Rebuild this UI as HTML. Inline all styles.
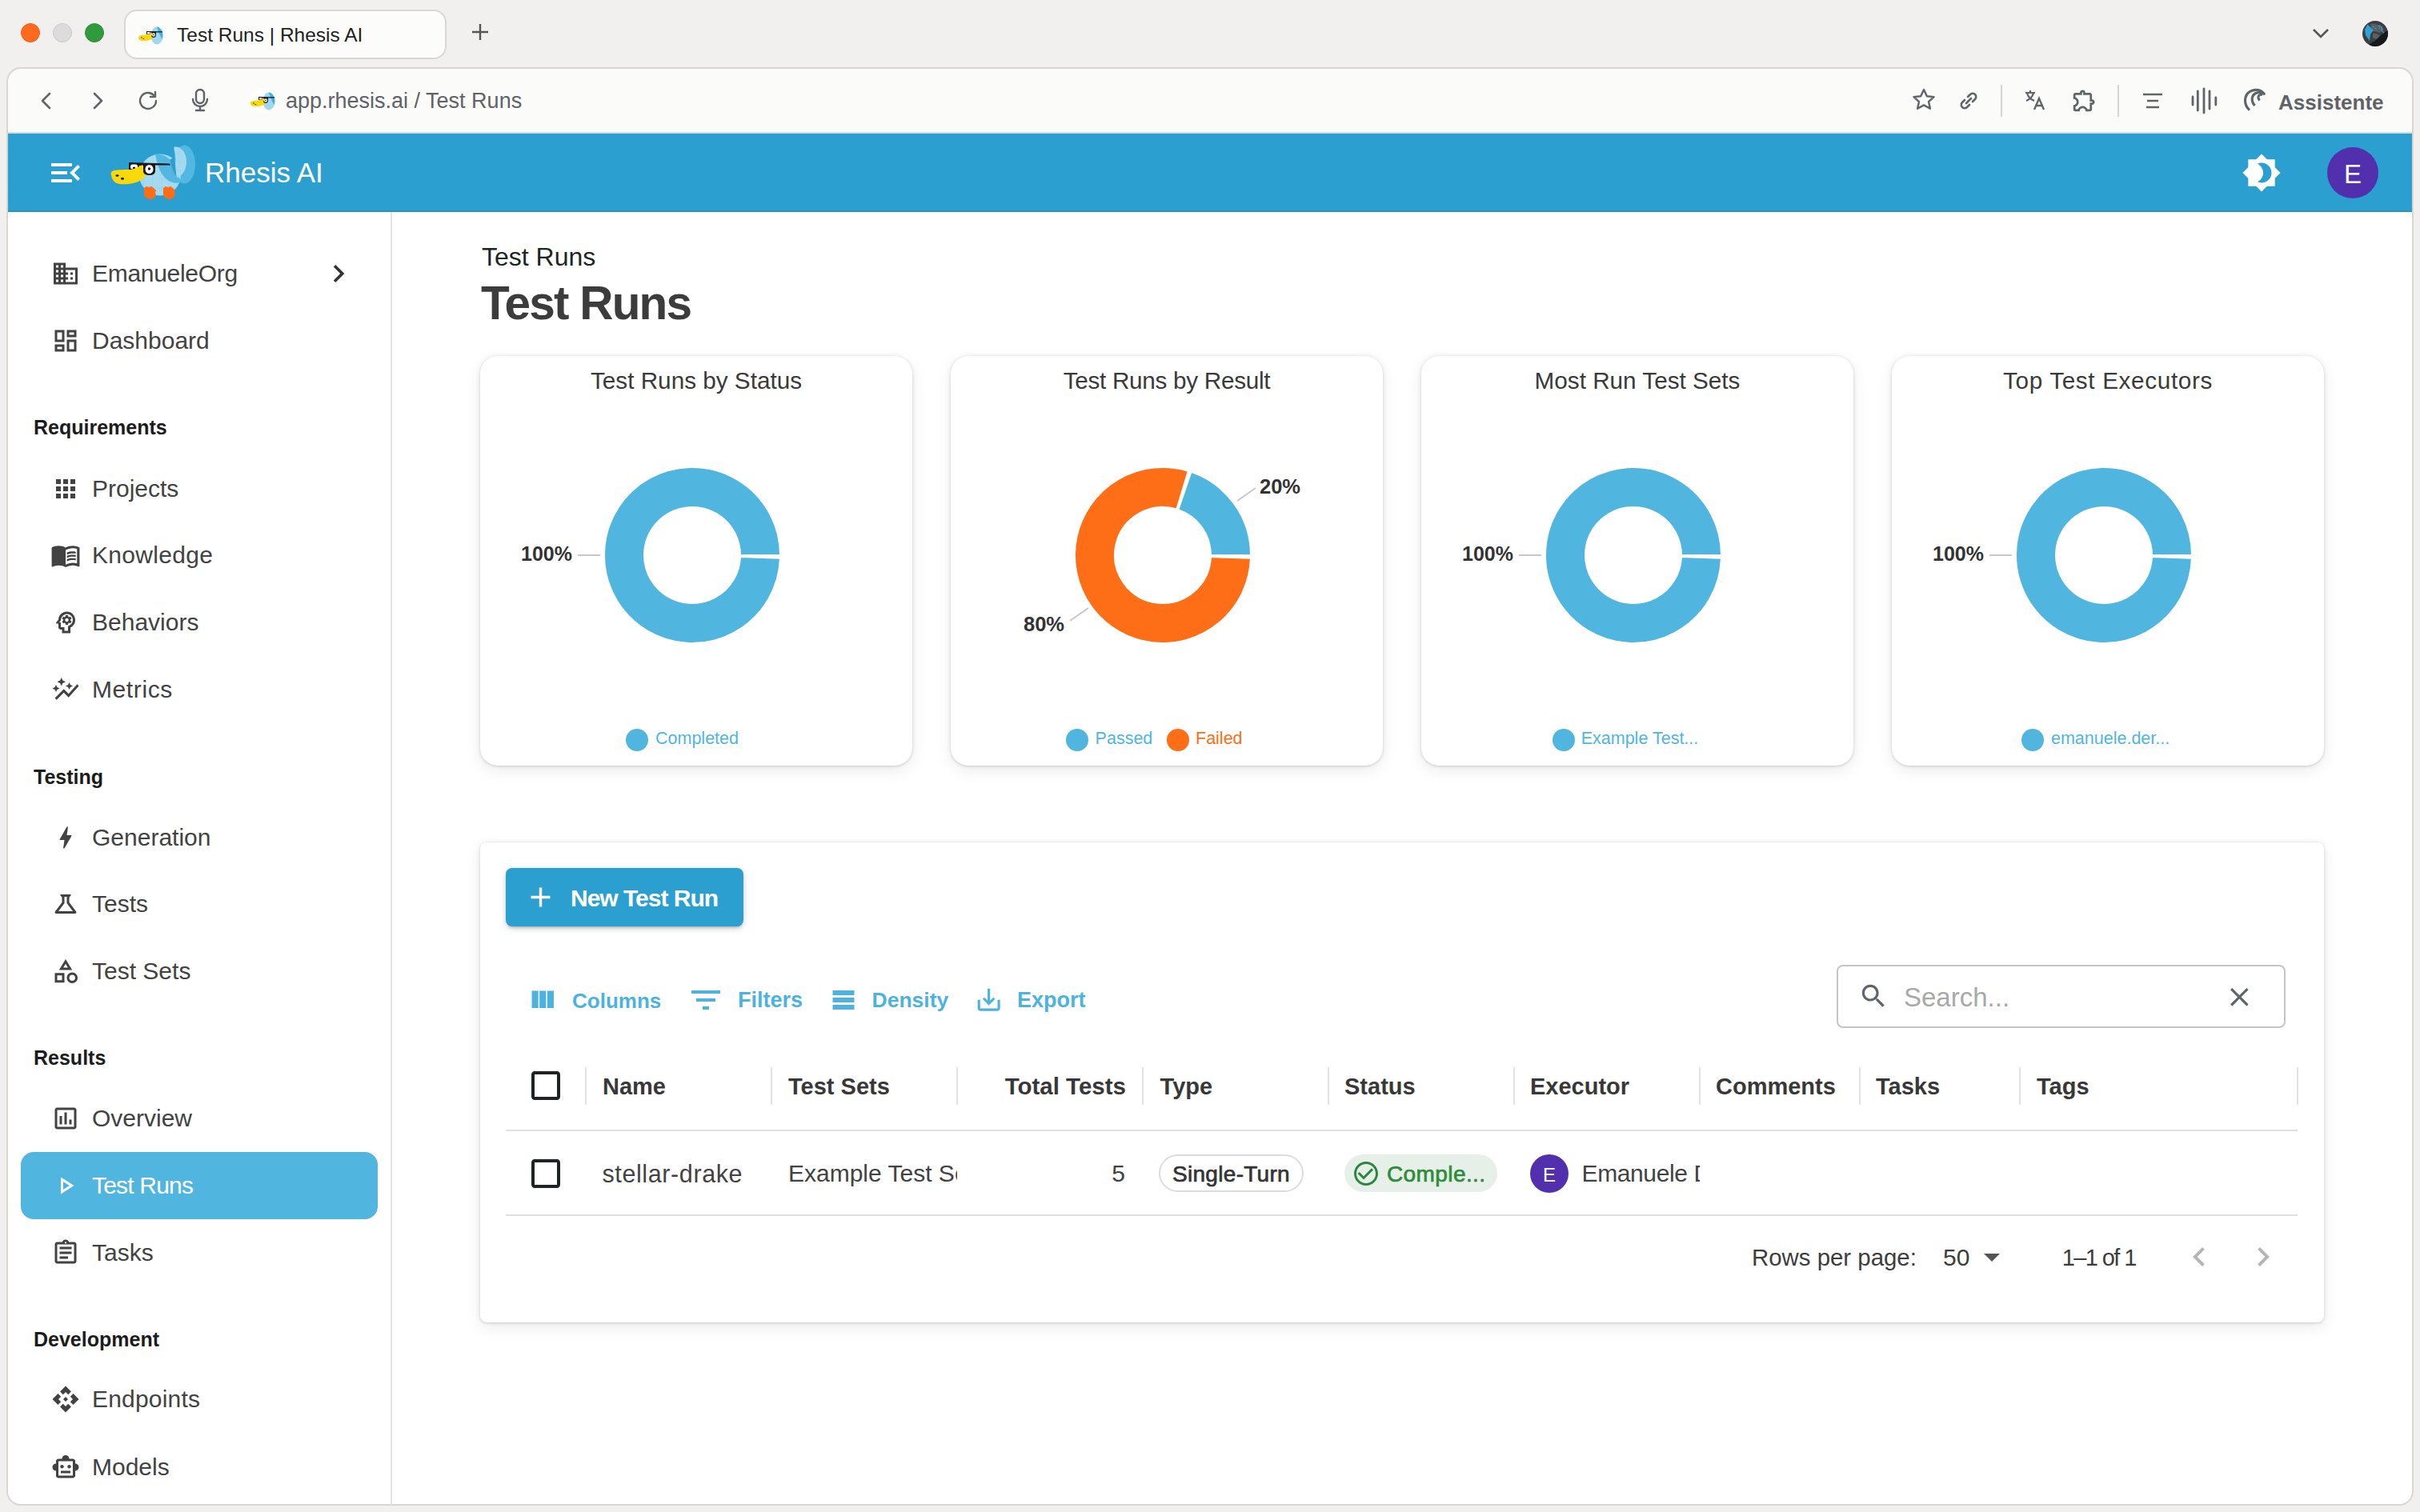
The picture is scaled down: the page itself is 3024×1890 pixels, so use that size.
<!DOCTYPE html><html><head><meta charset="utf-8"><title>Test Runs | Rhesis AI</title><style>
html,body{margin:0;padding:0;overflow:hidden;}
body{width:3024px;height:1890px;overflow:hidden;position:relative;background:#f1f0ee;font-family:"Liberation Sans", sans-serif;}
.t{position:absolute;white-space:nowrap;line-height:normal;font-family:"Liberation Sans", sans-serif;}
</style></head><body>
<div style="position:absolute;left:26px;top:29px;width:24px;height:24px;border-radius:50%;background:#fd6a1d;box-sizing:border-box;border:1px solid #f06014;"></div>
<div style="position:absolute;left:66px;top:29px;width:24px;height:24px;border-radius:50%;background:#dcdcdc;box-sizing:border-box;border:1px solid #c9c9c9;"></div>
<div style="position:absolute;left:106px;top:29px;width:24px;height:24px;border-radius:50%;background:#2f9b3d;box-sizing:border-box;border:1px solid #2a8c37;"></div>
<div style="position:absolute;left:155px;top:12px;width:403px;height:62px;box-sizing:border-box;border:2px solid #d9d7d1;border-radius:16px;background:#fcfcfb;"></div>
<svg style="position:absolute;left:172px;top:28px" width="32" height="32" viewBox="0 0 32 32"><defs><pattern id="fav188" width="1.6" height="1.6" patternUnits="userSpaceOnUse"><rect width="1.6" height="1.6" fill="#a9dbf1"/><circle cx="0.8" cy="0.8" r="0.4" fill="#7fcbea"/></pattern></defs>

<ellipse cx="24" cy="16.5" rx="7.5" ry="11" fill="url(#fav188)"/>
<path d="M24 5.5 C28 6 31 10 31.5 16 L31 21 C28 18 26 12 24 5.5Z" fill="#44b0e0"/>
<path d="M1 20 C0.5 15.5 5 16 10 15.5 C15 15 17 13 19 12.5 C21 13 21.5 17 19.5 19.5 C16 22.5 10 23.5 6 23 C3 22.8 1.5 22 1 20Z" fill="#f9d90a"/>
<path d="M11 11 L31 11.3 L31 12.5 L23 12.5 L23 16 C23 18 21.5 19 20 19 C18 19 17 18 17 16 L17 12.5 L15.5 12.5 L15.5 15 L11 15Z" fill="#1a1a1a"/>
<rect x="12" y="12" width="3" height="2.5" fill="#fff"/><ellipse cx="20" cy="15.5" rx="2" ry="2.3" fill="#fff"/>
<circle cx="20" cy="15.5" r="0.8" fill="#111"/>
<path d="M11.5 16 C14 15.5 16.5 14 18 13 C19 14.5 18.5 16 17 16.5Z" fill="#f9d90a"/>
<rect x="4.5" y="18" width="0.9" height="1.8" fill="#1a1a2a"/><rect x="6.5" y="20" width="1.6" height="0.9" fill="#1a1a2a"/></svg>
<div class="t" style="left:221.0px;top:29.8px;font-size:24.5px;font-weight:400;color:#1f1f1f;">Test Runs | Rhesis AI</div>
<svg style="position:absolute;left:588px;top:28px;" width="24" height="24" viewBox="0 0 24 24"><path d="M12 2v20M2 12h20" stroke="#555" stroke-width="2.4" fill="none"/></svg>
<svg style="position:absolute;left:2889px;top:34px;" width="22" height="16" viewBox="0 0 22 16"><path d="M2 3l9 9 9-9" stroke="#555" stroke-width="2.6" fill="none"/></svg>
<svg style="position:absolute;left:2952px;top:26px;" width="32" height="32" viewBox="0 0 32 32"><defs><clipPath id="gclip"><circle cx="16" cy="16" r="16"/></clipPath></defs><g clip-path="url(#gclip)"><rect width="32" height="32" fill="#3c3f42"/><path d="M10 4 C16 3 24 5 27 11 L22 15 C18 13 15 14 12 12Z" fill="#5a5e61"/><path d="M13 16 C17 15 21 17 22 20 C19 24 16 23 13 21Z" fill="#5c6063"/><path d="M6 32 L32 32 L32 12 C27 14 22 19 17 24 C13 27 9 28 6 32Z" fill="#16191c"/><path d="M6.5 4.5 L14 12 L12 14 L10 17 L9 25 L4 18 L3 11Z" fill="#2fa3d9"/><circle cx="13.5" cy="7.5" r="0.9" fill="#2fa3d9"/><circle cx="16.5" cy="9.5" r="0.9" fill="#2fa3d9"/><circle cx="20.3" cy="6.3" r="0.9" fill="#2fa3d9"/><circle cx="22.3" cy="6.3" r="0.9" fill="#2fa3d9"/><circle cx="21.3" cy="8.6" r="0.9" fill="#2fa3d9"/><path d="M24 7 v5 M24.5 12.5 l2.5 2.5" stroke="#2fa3d9" stroke-width="1.2" fill="none"/></g></svg>
<div style="position:absolute;left:8px;top:84px;width:3008px;height:1798px;box-sizing:border-box;border:2px solid #d9d7d1;border-radius:18px;background:#fbfbf9;overflow:hidden;">
<div style="position:absolute;left:0;top:0;width:100%;height:100%;">
</div></div>
<svg style="position:absolute;left:46px;top:114px;" width="24" height="24" viewBox="0 0 24 24"><path d="M16 3L7 12l9 9" stroke="#5f6469" stroke-width="2.6" fill="none" stroke-linecap="round" stroke-linejoin="round"/></svg>
<svg style="position:absolute;left:110px;top:114px;" width="24" height="24" viewBox="0 0 24 24"><path d="M8 3l9 9-9 9" stroke="#5f6469" stroke-width="2.6" fill="none" stroke-linecap="round" stroke-linejoin="round"/></svg>
<svg style="position:absolute;left:172px;top:112px;" width="28" height="28" viewBox="0 0 28 28"><path d="M23 14a10 10 0 1 1-3-7.2" stroke="#5f6469" stroke-width="2.4" fill="none" stroke-linecap="round"/><path d="M22 3v6h-6" stroke="#5f6469" stroke-width="2.4" fill="none" stroke-linecap="round" stroke-linejoin="round"/></svg>
<svg style="position:absolute;left:238px;top:110px;" width="24" height="30" viewBox="0 0 24 30"><rect x="7" y="2" width="10" height="17" rx="5" stroke="#5f6469" stroke-width="2.4" fill="none"/><path d="M3 14a9 9 0 0 0 18 0M12 23v5M7 28h10" stroke="#5f6469" stroke-width="2.4" fill="none" stroke-linecap="round"/></svg>
<svg style="position:absolute;left:312px;top:110px" width="32" height="32" viewBox="0 0 32 32"><defs><pattern id="fav328" width="1.6" height="1.6" patternUnits="userSpaceOnUse"><rect width="1.6" height="1.6" fill="#a9dbf1"/><circle cx="0.8" cy="0.8" r="0.4" fill="#7fcbea"/></pattern></defs>
<circle cx="16" cy="16" r="16" fill="#fff"/>
<ellipse cx="24" cy="16.5" rx="7.5" ry="11" fill="url(#fav328)"/>
<path d="M24 5.5 C28 6 31 10 31.5 16 L31 21 C28 18 26 12 24 5.5Z" fill="#44b0e0"/>
<path d="M1 20 C0.5 15.5 5 16 10 15.5 C15 15 17 13 19 12.5 C21 13 21.5 17 19.5 19.5 C16 22.5 10 23.5 6 23 C3 22.8 1.5 22 1 20Z" fill="#f9d90a"/>
<path d="M11 11 L31 11.3 L31 12.5 L23 12.5 L23 16 C23 18 21.5 19 20 19 C18 19 17 18 17 16 L17 12.5 L15.5 12.5 L15.5 15 L11 15Z" fill="#1a1a1a"/>
<rect x="12" y="12" width="3" height="2.5" fill="#fff"/><ellipse cx="20" cy="15.5" rx="2" ry="2.3" fill="#fff"/>
<circle cx="20" cy="15.5" r="0.8" fill="#111"/>
<path d="M11.5 16 C14 15.5 16.5 14 18 13 C19 14.5 18.5 16 17 16.5Z" fill="#f9d90a"/>
<rect x="4.5" y="18" width="0.9" height="1.8" fill="#1a1a2a"/><rect x="6.5" y="20" width="1.6" height="0.9" fill="#1a1a2a"/></svg>
<div class="t" style="left:357.0px;top:110.6px;font-size:27px;font-weight:400;color:#5f6368;">app.rhesis.ai / Test Runs</div>
<svg style="position:absolute;left:2388px;top:109px;" width="32" height="32" viewBox="0 0 32 32"><path d="M16 3l3.8 8.2 8.8.9-6.6 6 1.9 8.7L16 22.4l-7.9 4.4 1.9-8.7-6.6-6 8.8-.9z" stroke="#5f6469" stroke-width="2.4" fill="none" stroke-linejoin="round"/></svg>
<svg style="position:absolute;left:2446px;top:112px;" width="28" height="28" viewBox="0 0 28 28"><path d="M11 17l6-6M9 13l-3 3a4 4 0 0 0 6 6l3-3M19 15l3-3a4 4 0 0 0-6-6l-3 3" stroke="#5f6469" stroke-width="2.6" fill="none" stroke-linecap="round"/></svg>
<div style="position:absolute;left:2500px;top:106px;width:2px;height:40px;background:#d6d4ce;"></div>
<svg style="position:absolute;left:2528px;top:111px;" width="28" height="28" viewBox="0 0 28 28"><path d="M3 5h12M9 2v3M5 5c1 5 4 8 9 10M13 5c-1 5-4 8-9 10" stroke="#5f6469" stroke-width="2.2" fill="none"/><path d="M14 26l6-14 6 14M16 21h8" stroke="#5f6469" stroke-width="2.4" fill="none"/></svg>
<svg style="position:absolute;left:2588.0px;top:108.5px;" width="33" height="33" viewBox="0 0 24 24"><path fill="#5f6469" d="M10.5 4.5c.28 0 .5.22.5.5v2h6v6h2c.28 0 .5.22.5.5s-.22.5-.5.5h-2v6h-2.12c-.68-1.75-2.39-3-4.38-3s-3.7 1.25-4.38 3H4v-2.12c1.75-.68 3-2.39 3-4.38 0-1.990-1.24-3.7-2.99-4.38L4 7h6V5c0-.28.22-.5.5-.5m0-2C9.12 2.5 8 3.620 8 5H4c-1.1 0-1.99.9-1.99 2v3.8h.29c1.49 0 2.7 1.21 2.7 2.7s-1.21 2.7-2.7 2.7H2V20c0 1.1.9 2 2 2h3.8v-.3c0-1.49 1.21-2.7 2.7-2.7s2.7 1.21 2.7 2.7v.3H17c1.1 0 2-.9 2-2v-4c1.38 0 2.5-1.12 2.5-2.5S20.38 11 19 11V7c0-1.1-.9-2-2-2h-4c0-1.38-1.12-2.5-2.5-2.5z"/></svg>
<div style="position:absolute;left:2646px;top:106px;width:2px;height:40px;background:#d6d4ce;"></div>
<svg style="position:absolute;left:2676px;top:114px;" width="28" height="24" viewBox="0 0 28 24"><path d="M2 4h24M7 12h14M6 20h16" stroke="#5f6469" stroke-width="2.6" fill="none"/></svg>
<svg style="position:absolute;left:2736px;top:108px;" width="36" height="36" viewBox="0 0 36 36"><path d="M4 13v10M10.3 6v24M18 3v30M25 6v22M32.8 14v9" stroke="#5f6469" stroke-width="2.8" fill="none" stroke-linecap="round"/></svg>
<svg style="position:absolute;left:2795px;top:100px;" width="50" height="50" viewBox="0 0 50 50"><path d="M16 37.5 C8.5 31 8.5 19 17 14.2 C23 11 31 11.8 35 18.5" stroke="#5f6469" stroke-width="3.1" fill="none"/><path d="M22.6 32 C17.5 26.5 18 18.5 25 16 C28 15 31 15.5 33.5 17" stroke="#5f6469" stroke-width="3.1" fill="none"/><path d="M28.6 25.5 C26.3 23.2 26.3 19.6 29.2 18.4 C30.3 18 31.3 18 32.3 18.3" stroke="#5f6469" stroke-width="3.1" fill="none"/></svg>
<div class="t" style="left:2847.0px;top:112.5px;font-size:26px;font-weight:700;color:#5f6368;">Assistente</div>
<div style="position:absolute;left:10px;top:165px;width:3004px;height:2px;background:#dcdad4;"></div>
<div style="position:absolute;left:10px;top:167px;width:3004px;height:98px;background:#2b9fcf;"></div>
<div style="position:absolute;left:10px;top:263px;width:3004px;height:2px;background:#2892c0;"></div>
<svg style="position:absolute;left:58.0px;top:192.0px;" width="48" height="48" viewBox="0 0 24 24"><path fill="#fff" d="M3 18h13v-2H3v2zm0-5h10v-2H3v2zm0-7v2h13V6H3zm18 9.59L17.42 12 21 8.41 19.59 7l-5 5 5 5L21 15.59z"/></svg>
<svg style="position:absolute;left:130px;top:175px" width="125.0" height="83.0" viewBox="0 0 125.0 83.0"><defs><pattern id="dots130_175" width="2.2" height="2.2" patternUnits="userSpaceOnUse"><rect width="2.2" height="2.2" fill="#aadcf1"/><circle cx="1.1" cy="1.1" r="0.6" fill="#86cdea"/></pattern></defs>
<g transform="scale(1.0)">
<ellipse cx="100.5" cy="30.5" rx="13.5" ry="24" fill="#52b7e1"/>
<circle cx="70" cy="43.6" r="26" fill="url(#dots130_175)"/>
<path d="M64 17.6 C66 30 70 42 78 49 C84 54 92 55 97 52 L93 46 C88 44 85 36 83 25 C78 20 71 17.6 64 17.6Z" fill="#52b7e1"/>
<path d="M82.5 24.5 L88.5 21 C89 30 89.5 38 90.5 45.5 C86.5 41 84 33 82.5 24.5Z" fill="#2b9fcf"/>
<path d="M88 8.5 C96 7.5 103 15 103 27 C103 37 98 45 91 47 C89.5 38 90 28 89 20 C88.5 15 86.5 10 88 8.5Z" fill="url(#dots130_175)"/>
<path d="M50 60 l3-2 3 1 3-1 3 2 3 3-1 3 1 3-2 3-3 2-3 0-3-1-3-2-1-3 0-3z" fill="#fd6c17"/>
<path d="M74 60 l3-2 3 1 3-1 3 2 3 3-1 3 1 3-2 3-3 2-3 0-3-1-3-2-1-3 0-3z" fill="#fd6c17"/>
<path d="M9 44 C7 37 15 37.5 28 37 C38 36.5 44 32 48 31 C53 30 54 41 50 47 C44 54 30 56 20 55 C13 54 10 50 9 44Z" fill="#f9d90a"/>
<ellipse cx="16.5" cy="44.5" rx="2" ry="1.3" fill="#1a1a2a"/><ellipse cx="23" cy="48.3" rx="2" ry="1.5" fill="#1a1a2a"/>
<path d="M31 28 L82 29.5 L83 31.5 L64 31.5 L64 39 C64 42 61 44 57 44 C52 44 49 42 49 39 L49 32 L44 32 L44 37 L31 37Z" fill="#1a1a1a"/>
<rect x="33" y="30.5" width="9" height="6" rx="2.5" fill="#fff"/>
<ellipse cx="56.5" cy="36.5" rx="5" ry="5.6" fill="#fff"/>
<circle cx="37.5" cy="35" r="1.6" fill="#111"/><circle cx="56.5" cy="36" r="1.7" fill="#111"/>
<path d="M32 38 C38 36 44 33 48 31 C50 34 48 37 45 38Z" fill="#f9d90a"/>
</g></svg>
<div class="t" style="left:256.0px;top:196.3px;font-size:35px;font-weight:400;color:#ffffff;">Rhesis AI</div>
<svg style="position:absolute;left:2801.0px;top:191.0px;" width="50" height="50" viewBox="0 0 24 24"><path fill="#fff" d="M20 8.69V4h-4.69L12 .69 8.69 4H4v4.69L.69 12 4 15.31V20h4.69L12 23.31 15.31 20H20v-4.69L23.31 12 20 8.69zM12 18c-.89 0-1.74-.2-2.5-.55C11.56 16.5 13 14.42 13 12s-1.44-4.5-3.5-5.45C10.26 6.2 11.11 6 12 6c3.31 0 6 2.69 6 6s-2.69 6-6 6z"/></svg>
<div style="position:absolute;left:2908px;top:184px;width:64px;height:64px;border-radius:50%;background:#5230ad;"></div>
<div class="t" style="left:2908.0px;top:199.1px;font-size:33px;font-weight:400;color:#fff;width:64px;text-align:center;">E</div>
<div style="position:absolute;left:10px;top:265px;width:3004px;height:1615px;background:#ffffff;border-bottom-left-radius:16px;border-bottom-right-radius:16px;"></div>
<div style="position:absolute;left:488px;top:265px;width:2px;height:1616px;background:#e3e3e3;"></div>
<svg style="position:absolute;left:64.0px;top:323.5px;" width="36" height="36" viewBox="0 0 24 24"><path fill="#424242" d="M12 7V3H2v18h20V7H12zM6 19H4v-2h2v2zm0-4H4v-2h2v2zm0-4H4V9h2v2zm0-4H4V5h2v2zm4 12H8v-2h2v2zm0-4H8v-2h2v2zm0-4H8V9h2v2zm0-4H8V5h2v2zm10 12h-8v-2h2v-2h-2v-2h2v-2h-2V9h8v10zm-2-8h-2v2h2v-2zm0 4h-2v2h2v-2z"/></svg>
<div class="t" style="left:115.0px;top:324.9px;font-size:30px;font-weight:400;color:#424242;letter-spacing:-0.3px;">EmanueleOrg</div>
<svg style="position:absolute;left:401.0px;top:320.0px;" width="44" height="44" viewBox="0 0 24 24"><path fill="#333" d="M10 6L8.59 7.41 13.17 12l-4.58 4.59L10 18l6-6z"/></svg>
<svg style="position:absolute;left:64.0px;top:407.5px;" width="36" height="36" viewBox="0 0 24 24"><path fill="#424242" d="M19 5v2h-4V5h4M9 5v6H5V5h4m10 8v6h-4v-6h4M9 17v2H5v-2h4M21 3h-8v6h8V3zM11 3H3v10h8V3zm10 8h-8v10h8V11zm-10 4H3v6h8v-6z"/></svg>
<div class="t" style="left:115.0px;top:408.9px;font-size:30px;font-weight:400;color:#424242;letter-spacing:0px;">Dashboard</div>
<div class="t" style="left:42.0px;top:520.4px;font-size:25px;font-weight:700;color:#1c1c1c;">Requirements</div>
<svg style="position:absolute;left:64.0px;top:592.5px;" width="36" height="36" viewBox="0 0 24 24"><path fill="#424242" d="M4 8h4V4H4v4zm6 12h4v-4h-4v4zm-6 0h4v-4H4v4zm0-6h4v-4H4v4zm6 0h4v-4h-4v4zm6-10v4h4V4h-4zm-6 4h4V4h-4v4zm6 6h4v-4h-4v4zm0 6h4v-4h-4v4z"/></svg>
<div class="t" style="left:115.0px;top:593.9px;font-size:30px;font-weight:400;color:#424242;letter-spacing:0px;">Projects</div>
<svg style="position:absolute;left:63.0px;top:675.0px;" width="38" height="38" viewBox="0 0 24 24"><path fill="#424242" d="M21 5c-1.11-.35-2.33-.5-3.5-.5-1.95 0-4.05.4-5.5 1.5-1.45-1.1-3.55-1.5-5.5-1.5S2.45 4.9 1 6v14.65c0 .25.25.5.5.5.1 0 .15-.05.25-.05C3.1 20.45 5.05 20 6.5 20c1.95 0 4.05.4 5.5 1.5 1.35-.85 3.8-1.5 5.5-1.5 1.65 0 3.35.3 4.75 1.05.1.05.15.05.25.05.25 0 .5-.25.5-.5V6c-.6-.45-1.25-.75-2-1zm0 13.5c-1.1-.35-2.3-.5-3.5-.5-1.7 0-4.15.65-5.5 1.5V8c1.35-.85 3.8-1.5 5.5-1.5 1.2 0 2.4.15 3.5.5v11.5zM17.5 10.5c.88 0 1.73.09 2.5.26V9.24c-.79-.15-1.64-.24-2.5-.24-1.7 0-3.24.29-4.5.83v1.66c1.13-.64 2.7-.99 4.5-.99zM13 12.49v1.66c1.13-.64 2.7-.99 4.5-.99.88 0 1.73.09 2.5.26V11.9c-.79-.15-1.64-.24-2.5-.24-1.7 0-3.24.3-4.5.83zM17.5 14.33c-1.7 0-3.24.29-4.5.83v1.66c1.13-.64 2.7-.99 4.5-.99.88 0 1.73.09 2.5.26v-1.52c-.79-.16-1.64-.24-2.5-.24z"/></svg>
<div class="t" style="left:115.0px;top:677.4px;font-size:30px;font-weight:400;color:#424242;letter-spacing:0.3px;">Knowledge</div>
<svg style="position:absolute;left:64.0px;top:759.5px;" width="36" height="36" viewBox="0 0 24 24"><path fill="#424242" d="M13 8.57c-.79 0-1.43.64-1.43 1.43s.64 1.43 1.43 1.43 1.43-.64 1.43-1.43-.64-1.43-1.43-1.43zM13 3C9.25 3 6.2 5.94 6.02 9.64L4.1 12.2c-.25.33-.01.8.4.8H6v3c0 1.1.9 2 2 2h1v3h7v-4.68c2.36-1.12 4-3.53 4-6.32 0-3.87-3.13-7-7-7zm1.01 12.5l-.01 3.5h-3v-3H8v-4H6.7l1.33-1.75C8.21 7.47 10.35 5 13 5c2.76 0 5 2.24 5 5 0 2.09-1.29 3.88-3.11 4.63l-.88.42v.45zM16 10c0 .13-.01.26-.02.39l.83.66c.08.06.1.16.05.25l-.8 1.39c-.05.09-.16.12-.24.09l-.99-.4c-.21.16-.43.29-.67.39L14 13.83c-.01.1-.1.17-.2.17h-1.6c-.1 0-.18-.07-.2-.17l-.15-1.06c-.25-.1-.47-.23-.68-.39l-.99.4c-.09.03-.2 0-.25-.09l-.8-1.39c-.05-.08-.03-.19.05-.25l.84-.66c-.01-.13-.02-.26-.02-.39s.02-.27.04-.39l-.85-.66c-.08-.06-.1-.16-.05-.26l.8-1.38c.05-.09.15-.12.24-.09l1 .4c.2-.15.43-.29.67-.39L12 6.17c.02-.1.1-.17.2-.17h1.6c.1 0 .18.07.2.17l.15 1.06c.24.1.46.23.67.39l1-.4c.09-.03.2 0 .24.09l.8 1.38c.05.09.03.2-.05.26l-.85.66c.03.12.04.25.04.39z"/></svg>
<div class="t" style="left:115.0px;top:760.9px;font-size:30px;font-weight:400;color:#424242;letter-spacing:0px;">Behaviors</div>
<svg style="position:absolute;left:64.0px;top:843.5px;" width="36" height="36" viewBox="0 0 24 24"><path fill="#424242" d="M14.06 9.94L12 9l2.06-.94L15 6l.94 2.06L18 9l-2.06.94L15 12l-.94-2.06zM4 14l.94-2.06L7 11l-2.06-.94L4 8l-.94 2.06L1 11l2.06.94L4 14zm4.5-5l1.09-2.41L12 5.5 9.59 4.41 8.5 2 7.41 4.41 5 5.5l2.41 1.09L8.5 9zm-4 11.5l6-6.01 4 4L23 8.93l-1.41-1.41-7.09 7.97-4-4L3 19l1.5 1.5z"/></svg>
<div class="t" style="left:115.0px;top:844.9px;font-size:30px;font-weight:400;color:#424242;letter-spacing:0.6px;">Metrics</div>
<div class="t" style="left:42.0px;top:956.9px;font-size:25px;font-weight:700;color:#1c1c1c;">Testing</div>
<svg style="position:absolute;left:64.0px;top:1028.5px;" width="36" height="36" viewBox="0 0 24 24"><path fill="#424242" d="M11 21h-1l1-7H7.5c-.58 0-.57-.32-.38-.66.19-.34.05-.08.07-.12C8.48 10.94 10.42 7.54 13 3h1l-1 7h3.5c.49 0 .56.33.47.51l-.07.15C12.96 17.55 11 21 11 21z"/></svg>
<div class="t" style="left:115.0px;top:1029.8px;font-size:30px;font-weight:400;color:#424242;letter-spacing:0px;">Generation</div>
<svg style="position:absolute;left:64.0px;top:1111.5px;" width="36" height="36" viewBox="0 0 24 24"><path fill="#424242" d="M13 11.33L18 18H6l5-6.67V6h2v5.33zM15.96 4H8.04C7.62 4 7.39 4.48 7.65 4.81L9 6.5v4.17L3.2 18.4c-.49.66-.02 1.6.8 1.6h16c.82 0 1.29-.94.8-1.6L15 10.67V6.5l1.35-1.69c.26-.33.03-.81-.39-.81z"/></svg>
<div class="t" style="left:115.0px;top:1112.8px;font-size:30px;font-weight:400;color:#424242;letter-spacing:0px;">Tests</div>
<svg style="position:absolute;left:64.0px;top:1195.5px;" width="36" height="36" viewBox="0 0 24 24"><path fill="#424242" d="M12 2l-5.5 9h11L12 2zm0 3.84L13.93 9h-3.87L12 5.84zM17.5 13c-2.49 0-4.5 2.01-4.5 4.5s2.01 4.5 4.5 4.5 4.5-2.01 4.5-4.5-2.01-4.5-4.5-4.5zm0 7c-1.38 0-2.5-1.12-2.5-2.5s1.12-2.5 2.5-2.5 2.5 1.12 2.5 2.5-1.12 2.5-2.5 2.5zM3 21.5h8v-8H3v8zm2-6h4v4H5v-4z"/></svg>
<div class="t" style="left:115.0px;top:1196.8px;font-size:30px;font-weight:400;color:#424242;letter-spacing:0px;">Test Sets</div>
<div class="t" style="left:42.0px;top:1307.9px;font-size:25px;font-weight:700;color:#1c1c1c;">Results</div>
<svg style="position:absolute;left:64.0px;top:1379.5px;" width="36" height="36" viewBox="0 0 24 24"><path fill="#424242" d="M19 3H5c-1.1 0-2 .9-2 2v14c0 1.1.9 2 2 2h14c1.1 0 2-.9 2-2V5c0-1.1-.9-2-2-2zm0 16H5V5h14v14zM7 10h2v7H7zm4-3h2v10h-2zm4 6h2v4h-2z"/></svg>
<div class="t" style="left:115.0px;top:1380.8px;font-size:30px;font-weight:400;color:#424242;letter-spacing:0px;">Overview</div>
<div style="position:absolute;left:26px;top:1440px;width:446px;height:84px;border-radius:16px;background:#50b6df;"></div>
<svg style="position:absolute;left:64.0px;top:1463.5px;" width="36" height="36" viewBox="0 0 24 24"><path fill="#ffffff" d="M10 8.64L15.27 12 10 15.36V8.64M8 5v14l11-7L8 5z"/></svg>
<div class="t" style="left:115.0px;top:1464.8px;font-size:30px;font-weight:400;color:#ffffff;letter-spacing:-0.8px;">Test Runs</div>
<svg style="position:absolute;left:64.0px;top:1547.5px;" width="36" height="36" viewBox="0 0 24 24"><path fill="#424242" d="M19 3h-4.18C14.4 1.84 13.3 1 12 1s-2.4.84-2.82 2H5c-1.1 0-2 .9-2 2v14c0 1.1.9 2 2 2h14c1.1 0 2-.9 2-2V5c0-1.1-.9-2-2-2zm-7-.25c.41 0 .75.34.75.75s-.34.75-.75.75-.75-.34-.75-.75.34-.75.75-.75zM19 19H5V5h14v14zM7 15h7v2H7zm0-4h10v2H7zm0-4h10v2H7z"/></svg>
<div class="t" style="left:115.0px;top:1548.8px;font-size:30px;font-weight:400;color:#424242;letter-spacing:0px;">Tasks</div>
<div class="t" style="left:42.0px;top:1660.4px;font-size:25px;font-weight:700;color:#1c1c1c;">Development</div>
<svg style="position:absolute;left:64.0px;top:1730.5px;" width="36" height="36" viewBox="0 0 24 24"><path fill="#424242" d="M14 12l-2 2-2-2 2-2 2 2zm-2-6l2.12 2.12 2.5-2.5L12 1 7.38 5.62l2.5 2.5L12 6zm-6 6l2.12-2.12-2.5-2.5L1 12l4.62 4.62 2.5-2.5L6 12zm12 0l-2.12 2.12 2.5 2.5L23 12l-4.62-4.62-2.5 2.5L18 12zm-6 6l-2.12-2.12-2.5 2.5L12 23l4.62-4.62-2.5-2.5L12 18z"/></svg>
<div class="t" style="left:115.0px;top:1731.8px;font-size:30px;font-weight:400;color:#424242;letter-spacing:0.2px;">Endpoints</div>
<svg style="position:absolute;left:64.0px;top:1816.0px;" width="36" height="36" viewBox="0 0 24 24"><path fill="#424242" d="M20 9V7c0-1.1-.9-2-2-2h-3c0-1.66-1.34-3-3-3S9 3.34 9 5H6c-1.1 0-2 .9-2 2v2c-1.66 0-3 1.34-3 3s1.34 3 3 3v4c0 1.1.9 2 2 2h12c1.1 0 2-.9 2-2v-4c1.66 0 3-1.34 3-3s-1.34-3-3-3zm-2 10H6V7h12v12zm-9-6c-.83 0-1.5-.67-1.5-1.5S8.17 10 9 10s1.5.67 1.5 1.5S9.83 13 9 13zm7.5-1.5c0 .83-.67 1.5-1.5 1.5s-1.5-.67-1.5-1.5.67-1.5 1.5-1.5 1.5.67 1.5 1.5zM8 15h8v2H8v-2z"/></svg>
<div class="t" style="left:115.0px;top:1817.3px;font-size:30px;font-weight:400;color:#424242;letter-spacing:0px;">Models</div>
<div class="t" style="left:602.0px;top:303.0px;font-size:32px;font-weight:400;color:#1d2524;">Test Runs</div>
<div class="t" style="left:601.0px;top:344.6px;font-size:58.5px;font-weight:700;color:#3c3c3c;letter-spacing:-1.8px;">Test Runs</div>
<div style="position:absolute;left:600px;top:445px;width:540px;height:512px;border-radius:22px;background:#fff;box-shadow:0 1px 3px rgba(0,0,0,0.12),0 0 6px rgba(0,0,0,0.07),0 6px 20px rgba(0,0,0,0.08);"></div>
<div class="t" style="left:620.0px;top:458.5px;font-size:29.7px;font-weight:400;color:#3a3a3a;width:500px;text-align:center;letter-spacing:0;">Test Runs by Status</div>
<svg style="position:absolute;left:600px;top:445px;" width="540" height="512" viewBox="0 0 540 512"><g transform="translate(-600,-445)"><path d="M975.00 694.00 A110 110 0 1 0 974.93 697.84 L924.96 696.09 A60 60 0 1 1 925.00 694.00Z" fill="#50b6df" stroke="#fff" stroke-width="2"/><path d="M722 694 L750 694" stroke="#c8c8c8" stroke-width="2"/></g></svg>
<div class="t" style="left:635.0px;top:677.8px;font-size:25px;font-weight:700;color:#333;width:80px;text-align:right;">100%</div>
<div class="t" style="left:652.0px;top:911.2px;font-size:21.5px;font-weight:400;color:#333;"></div>
<div style="position:absolute;left:1188px;top:445px;width:540px;height:512px;border-radius:22px;background:#fff;box-shadow:0 1px 3px rgba(0,0,0,0.12),0 0 6px rgba(0,0,0,0.07),0 6px 20px rgba(0,0,0,0.08);"></div>
<div class="t" style="left:1208.0px;top:458.5px;font-size:29.7px;font-weight:400;color:#3a3a3a;width:500px;text-align:center;letter-spacing:-0.28px;">Test Runs by Result</div>
<svg style="position:absolute;left:1188px;top:445px;" width="540" height="512" viewBox="0 0 540 512"><g transform="translate(-1188,-445)"><path d="M1563.00 694.00 A110 110 0 0 0 1488.45 589.87 L1472.34 637.20 A60 60 0 0 1 1513.00 694.00Z" fill="#50b6df" stroke="#fff" stroke-width="2"/><path d="M1484.79 588.69 A110 110 0 1 0 1562.93 697.84 L1512.96 696.09 A60 60 0 1 1 1470.34 636.56Z" fill="#fd6e17" stroke="#fff" stroke-width="2"/><path d="M1546 626 L1569 610" stroke="#c8c8c8" stroke-width="2"/><path d="M1337 776 L1360 760" stroke="#c8c8c8" stroke-width="2"/></g></svg>
<div class="t" style="left:1574.0px;top:594.4px;font-size:25.5px;font-weight:700;color:#333;">20%</div>
<div class="t" style="left:1279.0px;top:765.9px;font-size:25.5px;font-weight:700;color:#333;">80%</div>
<div style="position:absolute;left:1776px;top:445px;width:540px;height:512px;border-radius:22px;background:#fff;box-shadow:0 1px 3px rgba(0,0,0,0.12),0 0 6px rgba(0,0,0,0.07),0 6px 20px rgba(0,0,0,0.08);"></div>
<div class="t" style="left:1796.0px;top:458.5px;font-size:29.7px;font-weight:400;color:#3a3a3a;width:500px;text-align:center;letter-spacing:0;">Most Run Test Sets</div>
<svg style="position:absolute;left:1776px;top:445px;" width="540" height="512" viewBox="0 0 540 512"><g transform="translate(-1776,-445)"><path d="M2151.00 694.00 A110 110 0 1 0 2150.93 697.84 L2100.96 696.09 A60 60 0 1 1 2101.00 694.00Z" fill="#50b6df" stroke="#fff" stroke-width="2"/><path d="M1898 694 L1926 694" stroke="#c8c8c8" stroke-width="2"/></g></svg>
<div class="t" style="left:1811.0px;top:677.8px;font-size:25px;font-weight:700;color:#333;width:80px;text-align:right;">100%</div>
<div class="t" style="left:1828.0px;top:911.2px;font-size:21.5px;font-weight:400;color:#333;"></div>
<div style="position:absolute;left:2364px;top:445px;width:540px;height:512px;border-radius:22px;background:#fff;box-shadow:0 1px 3px rgba(0,0,0,0.12),0 0 6px rgba(0,0,0,0.07),0 6px 20px rgba(0,0,0,0.08);"></div>
<div class="t" style="left:2384.0px;top:458.5px;font-size:29.7px;font-weight:400;color:#3a3a3a;width:500px;text-align:center;letter-spacing:0.65px;">Top Test Executors</div>
<svg style="position:absolute;left:2364px;top:445px;" width="540" height="512" viewBox="0 0 540 512"><g transform="translate(-2364,-445)"><path d="M2739.00 694.00 A110 110 0 1 0 2738.93 697.84 L2688.96 696.09 A60 60 0 1 1 2689.00 694.00Z" fill="#50b6df" stroke="#fff" stroke-width="2"/><path d="M2486 694 L2514 694" stroke="#c8c8c8" stroke-width="2"/></g></svg>
<div class="t" style="left:2399.0px;top:677.8px;font-size:25px;font-weight:700;color:#333;width:80px;text-align:right;">100%</div>
<div class="t" style="left:2416.0px;top:911.2px;font-size:21.5px;font-weight:400;color:#333;"></div>
<div style="position:absolute;left:782px;top:910.6px;width:28px;height:28px;border-radius:50%;background:#50b6df;"></div>
<div class="t" style="left:819.0px;top:911.2px;font-size:21.5px;font-weight:400;color:#50b6df;">Completed</div>
<div style="position:absolute;left:1332px;top:910.6px;width:28px;height:28px;border-radius:50%;background:#50b6df;"></div>
<div class="t" style="left:1368.6px;top:911.2px;font-size:21.5px;font-weight:400;color:#50b6df;">Passed</div>
<div style="position:absolute;left:1458px;top:910.6px;width:28px;height:28px;border-radius:50%;background:#fd6e17;"></div>
<div class="t" style="left:1494.0px;top:911.2px;font-size:21.5px;font-weight:400;color:#fd6e17;">Failed</div>
<div style="position:absolute;left:1940px;top:910.6px;width:28px;height:28px;border-radius:50%;background:#50b6df;"></div>
<div class="t" style="left:1975.7px;top:911.2px;font-size:21.5px;font-weight:400;color:#50b6df;">Example Test...</div>
<div style="position:absolute;left:2526px;top:910.6px;width:28px;height:28px;border-radius:50%;background:#50b6df;"></div>
<div class="t" style="left:2563.0px;top:911.2px;font-size:21.5px;font-weight:400;color:#50b6df;">emanuele.der...</div>
<div style="position:absolute;left:600px;top:1053px;width:2304px;height:600px;border-radius:8px;background:#fff;box-shadow:0 1px 3px rgba(0,0,0,0.12),0 0 6px rgba(0,0,0,0.07),0 6px 20px rgba(0,0,0,0.08);"></div>
<div style="position:absolute;left:632px;top:1085px;width:297px;height:73px;border-radius:8px;background:#2b9fcf;box-shadow:0 3px 3px -2px rgba(0,0,0,0.2),0 3px 6px rgba(0,0,0,0.14),0 1px 10px rgba(0,0,0,0.08);"></div>
<svg style="position:absolute;left:655.4px;top:1101.4px;" width="41" height="41" viewBox="0 0 24 24"><path fill="#fff" d="M19 13h-6v6h-2v-6H5v-2h6V5h2v6h6v2z"/></svg>
<div class="t" style="left:713.0px;top:1105.5px;font-size:30px;font-weight:700;color:#ffffff;letter-spacing:-1px;">New Test Run</div>
<svg style="position:absolute;left:660.2px;top:1231.4px;" width="36.5" height="36.5" viewBox="0 0 24 24"><path fill="#4db3de" d="M14.67 5v14H9.33V5h5.34zm1 14H21V5h-5.33v14zm-7.34 0V5H3v14h5.33z"/></svg>
<div class="t" style="left:715.0px;top:1235.5px;font-size:26px;font-weight:700;color:#4db3de;">Columns</div>
<svg style="position:absolute;left:858.0px;top:1226.0px;" width="48" height="48" viewBox="0 0 24 24"><path fill="#4db3de" d="M10 18h4v-2h-4v2zM3 6v2h18V6H3zm3 7h12v-2H6v2z"/></svg>
<div class="t" style="left:922.0px;top:1234.6px;font-size:27px;font-weight:700;color:#4db3de;">Filters</div>
<svg style="position:absolute;left:1035.5px;top:1231.7px;" width="36" height="36" viewBox="0 0 24 24"><path fill="#4db3de" d="M21 8H3V4h18v4zm0 2H3v4h18v-4zm0 6H3v4h18v-4z"/></svg>
<div class="t" style="left:1089.5px;top:1235.0px;font-size:26.5px;font-weight:700;color:#4db3de;">Density</div>
<svg style="position:absolute;left:1217.1px;top:1231.1px;" width="37.3" height="37.3" viewBox="0 0 24 24"><path fill="#4db3de" d="M19 12v7H5v-7H3v7c0 1.1.9 2 2 2h14c1.1 0 2-.9 2-2v-7h-2zm-6 .67l2.59-2.58L17 11.5l-5 5-5-5 1.41-1.41L11 12.67V3h2z"/></svg>
<div class="t" style="left:1271.0px;top:1234.6px;font-size:27px;font-weight:700;color:#4db3de;">Export</div>
<div style="position:absolute;left:2295px;top:1206px;width:561px;height:79px;box-sizing:border-box;border:2px solid #c4c4c4;border-radius:8px;background:#fff;"></div>
<svg style="position:absolute;left:2322.2px;top:1226.2px;" width="38.4" height="38.4" viewBox="0 0 24 24"><path fill="#5f6469" d="M15.5 14h-.79l-.28-.27C15.41 12.59 16 11.11 16 9.5 16 5.91 13.09 3 9.5 3S3 5.91 3 9.5 5.91 16 9.5 16c1.61 0 3.09-.59 4.23-1.57l.27.28v.79l5 4.99L20.49 19l-4.99-5zm-6 0C7.01 14 5 11.99 5 9.5S7.01 5 9.5 5 14 7.01 14 9.5 11.99 14 9.5 14z"/></svg>
<div class="t" style="left:2379.0px;top:1228.1px;font-size:33px;font-weight:400;color:#a9a9a9;">Search...</div>
<svg style="position:absolute;left:2778.6px;top:1226.9px;" width="38.7" height="38.7" viewBox="0 0 24 24"><path fill="#5f6469" d="M19 6.41L17.59 5 12 10.59 6.41 5 5 6.41 10.59 12 5 17.59 6.41 19 12 13.41 17.59 19 19 17.59 13.41 12z"/></svg>
<svg style="position:absolute;left:658.0px;top:1333.0px;" width="48" height="48" viewBox="0 0 24 24"><path fill="#1e2326" d="M19 5v14H5V5h14m0-2H5c-1.1 0-2 .9-2 2v14c0 1.1.9 2 2 2h14c1.1 0 2-.9 2-2V5c0-1.1-.9-2-2-2z"/></svg>
<div style="position:absolute;left:731px;top:1334px;width:2px;height:47px;background:#e2e2e2;"></div>
<div style="position:absolute;left:963px;top:1334px;width:2px;height:47px;background:#e2e2e2;"></div>
<div style="position:absolute;left:1195px;top:1334px;width:2px;height:47px;background:#e2e2e2;"></div>
<div style="position:absolute;left:1427px;top:1334px;width:2px;height:47px;background:#e2e2e2;"></div>
<div style="position:absolute;left:1659px;top:1334px;width:2px;height:47px;background:#e2e2e2;"></div>
<div style="position:absolute;left:1891px;top:1334px;width:2px;height:47px;background:#e2e2e2;"></div>
<div style="position:absolute;left:2123px;top:1334px;width:2px;height:47px;background:#e2e2e2;"></div>
<div style="position:absolute;left:2323px;top:1334px;width:2px;height:47px;background:#e2e2e2;"></div>
<div style="position:absolute;left:2523px;top:1334px;width:2px;height:47px;background:#e2e2e2;"></div>
<div style="position:absolute;left:2870px;top:1334px;width:2px;height:47px;background:#e2e2e2;"></div>
<div class="t" style="left:753.0px;top:1341.8px;font-size:29px;font-weight:700;color:#383838;">Name</div>
<div class="t" style="left:985.0px;top:1341.8px;font-size:29px;font-weight:700;color:#383838;">Test Sets</div>
<div class="t" style="left:1107.0px;top:1341.3px;font-size:29.5px;font-weight:700;color:#383838;width:300px;text-align:right;">Total Tests</div>
<div class="t" style="left:1449.6px;top:1341.8px;font-size:29px;font-weight:700;color:#383838;">Type</div>
<div class="t" style="left:1680.0px;top:1341.8px;font-size:29px;font-weight:700;color:#383838;">Status</div>
<div class="t" style="left:1912.0px;top:1341.8px;font-size:29px;font-weight:700;color:#383838;">Executor</div>
<div class="t" style="left:2144.0px;top:1341.8px;font-size:29px;font-weight:700;color:#383838;">Comments</div>
<div class="t" style="left:2344.0px;top:1341.8px;font-size:29px;font-weight:700;color:#383838;">Tasks</div>
<div class="t" style="left:2545.0px;top:1341.8px;font-size:29px;font-weight:700;color:#383838;">Tags</div>
<div style="position:absolute;left:632px;top:1412px;width:2239px;height:2px;background:#e0e0e0;"></div>
<svg style="position:absolute;left:658.0px;top:1443.0px;" width="48" height="48" viewBox="0 0 24 24"><path fill="#1e2326" d="M19 5v14H5V5h14m0-2H5c-1.1 0-2 .9-2 2v14c0 1.1.9 2 2 2h14c1.1 0 2-.9 2-2V5c0-1.1-.9-2-2-2z"/></svg>
<div class="t" style="left:752.5px;top:1449.8px;font-size:30.5px;font-weight:400;color:#424242;letter-spacing:0.6px;">stellar-drake</div>
<div style="position:absolute;left:985px;top:1440px;width:211px;height:50px;overflow:hidden;">
<div class="t" style="left:0.0px;top:10.3px;font-size:30px;font-weight:400;color:#424242;">Example Test Sets</div>
</div>
<div class="t" style="left:1366.0px;top:1450.2px;font-size:30px;font-weight:400;color:#424242;width:40px;text-align:right;">5</div>
<div style="position:absolute;left:1448px;top:1443px;width:181px;height:47px;box-sizing:border-box;border:2px solid #dcdcdc;border-radius:23.5px;background:#fff;"></div>
<div class="t" style="left:1448.0px;top:1451.7px;font-size:28px;font-weight:400;color:#333;width:181px;text-align:center;-webkit-text-stroke:0.7px #333;letter-spacing:0.3px;">Single-Turn</div>
<div style="position:absolute;left:1680px;top:1443px;width:191px;height:47px;border-radius:23.5px;background:#e7efe9;"></div>
<svg style="position:absolute;left:1689.0px;top:1449.0px;" width="36" height="36" viewBox="0 0 24 24"><path fill="#2e8540" d="M16.59 7.58L10 14.17l-3.59-3.58L5 12l5 5 8-8zM12 2C6.48 2 2 6.48 2 12s4.48 10 10 10 10-4.48 10-10S17.52 2 12 2zm0 18c-4.42 0-8-3.58-8-8s3.58-8 8-8 8 3.58 8 8-3.58 8-8 8z"/></svg>
<div class="t" style="left:1733.0px;top:1451.7px;font-size:28px;font-weight:400;color:#2e8b3a;-webkit-text-stroke:0.7px #2e8b3a;letter-spacing:0.4px;">Comple...</div>
<div style="position:absolute;left:1912px;top:1443px;width:48px;height:48px;border-radius:50%;background:#5230ad;"></div>
<div class="t" style="left:1912.0px;top:1455.3px;font-size:24px;font-weight:400;color:#fff;width:48px;text-align:center;">E</div>
<div style="position:absolute;left:1976px;top:1440px;width:148px;height:50px;overflow:hidden;">
<div class="t" style="left:0.6px;top:10.3px;font-size:30px;font-weight:400;color:#424242;letter-spacing:-0.4px;">Emanuele De Rossi</div>
</div>
<div style="position:absolute;left:632px;top:1518px;width:2239px;height:2px;background:#e0e0e0;"></div>
<div class="t" style="left:2189.0px;top:1555.4px;font-size:29.4px;font-weight:400;color:#3d3d3d;">Rows per page:</div>
<div class="t" style="left:2428.0px;top:1554.8px;font-size:30px;font-weight:400;color:#3d3d3d;">50</div>
<svg style="position:absolute;left:2465.0px;top:1547.0px;" width="48" height="48" viewBox="0 0 24 24"><path fill="#555" d="M7 10l5 5 5-5z"/></svg>
<div class="t" style="left:2576.7px;top:1555.8px;font-size:29px;font-weight:400;color:#3d3d3d;letter-spacing:-1.6px;">1–1 of 1</div>
<svg style="position:absolute;left:2724.0px;top:1547.0px;" width="48" height="48" viewBox="0 0 24 24"><path fill="#b5b5b5" d="M15.41 7.41L14 6l-6 6 6 6 1.41-1.41L10.83 12z"/></svg>
<svg style="position:absolute;left:2804.0px;top:1547.0px;" width="48" height="48" viewBox="0 0 24 24"><path fill="#b5b5b5" d="M10 6L8.59 7.41 13.17 12l-4.58 4.59L10 18l6-6z"/></svg>
</body></html>
